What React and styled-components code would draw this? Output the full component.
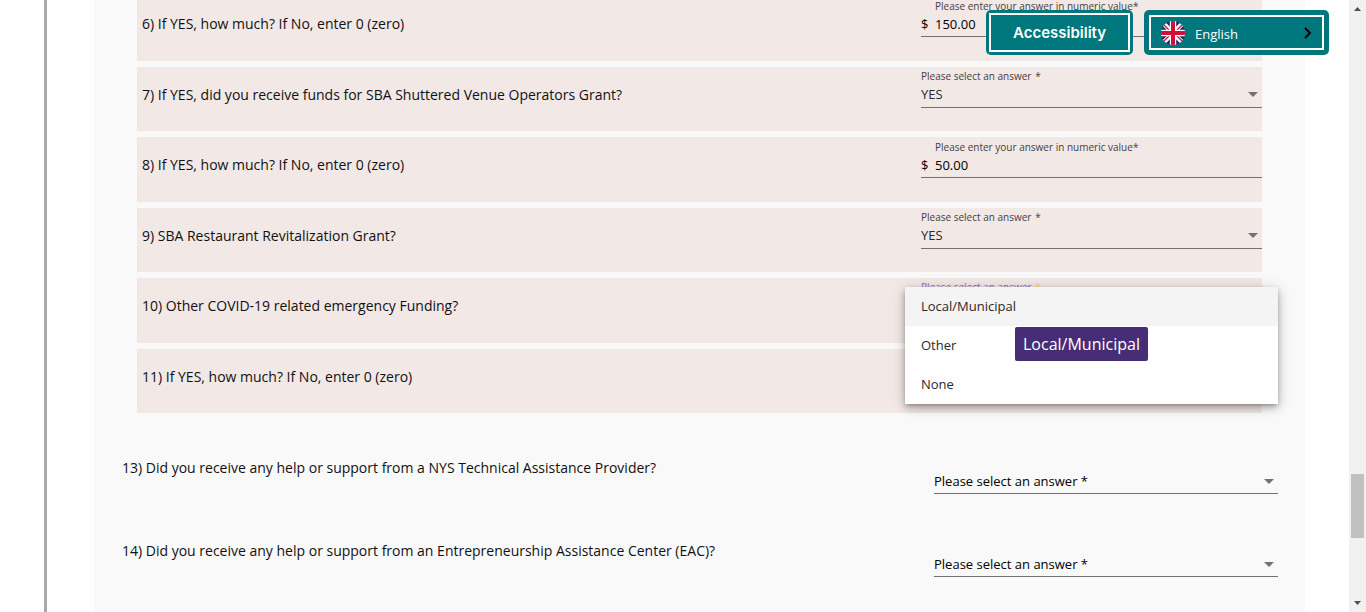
import React from "react";
import styled, { createGlobalStyle } from "styled-components";

const GlobalStyle = createGlobalStyle`
  * { box-sizing: border-box; }
  html, body, #root { height: 100%; }
  body {
    margin: 0;
    overflow: hidden;
    background: #fff;
    color: #111;
    font-family: "Open Sans", "Noto Sans", sans-serif;
    font-size: 14px;
  }
`;

const Viewport = styled.div`
  display: flex;
  height: 100vh;
  overflow: hidden;
`;

const Page = styled.main`
  flex: 1;
  min-width: 0;
  display: flex;
  margin-left: 44px;
  padding: 0 44px 0 47px;
  border-left: 3px solid #a9a8ae;
`;

const Panel = styled.form`
  flex: 1;
  min-width: 0;
  background: #f9f9f9;
`;

const FundingList = styled.section`
  display: grid;
  grid-auto-rows: 65px 64px;
  row-gap: 6px;
  margin: -4px 43px 0;
`;

const FundingRow = styled.div`
  display: grid;
  grid-template-columns: 784fr 341fr;
  background: #f2e8e6;
`;

const Question = styled.label`
  padding: 18px 5px 0;
  line-height: 20px;
`;

const Field = styled.div`
  position: relative;
  display: flex;
  flex-direction: column;
  height: 41px;
  padding-top: ${(p) => (p.$select ? 2 : 3)}px;
  border-bottom: 1px solid #757173;
`;

const FieldLabel = styled.span`
  display: flex;
  gap: ${(p) => (p.$spaced ? 4 : 0)}px;
  padding-left: ${(p) => p.$indent || 0}px;
  font-size: 10px;
  line-height: 14px;
  color: ${(p) => (p.$active ? "#8a68c8" : "#464140")};
`;

const Star = styled.span`
  color: ${(p) => (p.$active ? "#ffd740" : "inherit")};
`;

const Control = styled.div`
  display: grid;
  grid-template-columns: 1fr 10px;
  align-items: center;
  padding-right: 4px;
  height: 22px;
`;

const Select = styled.select`
  grid-area: 1 / 1 / 2 / 3;
  width: 100%;
  height: 22px;
  padding: 0;
  border: 0;
  outline: 0;
  appearance: none;
  background: transparent;
  color: ${(p) => (p.$prompt ? "#000" : "#2c2829")};
  font: 13px/20px "Open Sans", "Noto Sans", sans-serif;
`;

const Arrow = styled.span`
  grid-area: 1 / 2;
  border: 5px solid transparent;
  border-top-color: #757173;
  border-bottom: 0;
  pointer-events: none;
`;

const Amount = styled.div`
  display: flex;
  align-items: center;
  height: 22px;
  font-size: 13px;
  color: #000;
`;

const Currency = styled.span`
  width: 14px;
`;

const AmountInput = styled.input`
  flex: 1;
  min-width: 0;
  height: 22px;
  padding: 0;
  border: 0;
  outline: 0;
  background: transparent;
  color: #000;
  font: 13px/20px "Open Sans", "Noto Sans", sans-serif;
`;

const Menu = styled.ul`
  position: absolute;
  z-index: 2;
  top: 9px;
  left: -16px;
  right: -16px;
  margin: 0;
  padding: 0;
  list-style: none;
  background: #fff;
  box-shadow: 0 2px 4px -1px rgba(0, 0, 0, 0.25), 0 4px 8px rgba(0, 0, 0, 0.2),
    0 2px 14px rgba(0, 0, 0, 0.16);
`;

const Option = styled.li`
  padding: 0 16px;
  font-size: 13px;
  line-height: 39px;
  color: #2c2829;
  background: ${(p) => (p.$active ? "#f4f4f4" : "transparent")};
`;

const Tooltip = styled.div`
  position: absolute;
  top: 40px;
  left: 110px;
  padding: 0 8px;
  border-radius: 2px;
  background: #472d75;
  color: #fff;
  font-size: 16px;
  line-height: 34px;
  white-space: nowrap;
`;

const SupportList = styled.section`
  display: grid;
  grid-auto-rows: 83px;
  margin: 40px 27px 0 28px;
`;

const SupportRow = styled.div`
  display: grid;
  grid-template-columns: 812fr 344fr;
`;

const SupportQuestion = styled.label`
  padding-top: 5px;
  line-height: 20px;
`;

const SupportField = styled.div`
  display: flex;
  flex-direction: column;
  justify-content: flex-end;
  height: 41px;
  padding-bottom: 1px;
  border-bottom: 1px solid #757173;
`;

const FloatingBar = styled.div`
  position: fixed;
  z-index: 5;
  top: 10px;
  right: 37px;
  display: flex;
  align-items: center;
  gap: 11px;
`;

const FloatingButton = styled.button`
  display: flex;
  width: ${(p) => p.$width}px;
  height: 45px;
  padding: ${(p) => p.$edge}px;
  border: 0;
  border-radius: 5px;
  background: #00767d;
  color: #fff;
  cursor: pointer;
`;

const ButtonFace = styled.span`
  flex: 1;
  align-self: stretch;
  display: flex;
  align-items: center;
  justify-content: ${(p) => (p.$center ? "center" : "flex-start")};
  gap: 10px;
  padding: 0 10px;
  border: 2px solid #fff;
  font: ${(p) =>
    p.$center
      ? '600 15px/20px Inter, "Open Sans", sans-serif'
      : '13px/20px "Open Sans", "Noto Sans", sans-serif'};
`;

const Language = styled.span`
  flex: 1;
  padding-top: 2px;
  text-align: left;
`;

const ScrollRail = styled.div`
  width: 17px;
  display: flex;
  flex-direction: column;
  align-items: center;
  background: #f1f1f1;
`;

const RailSpace = styled.span`
  flex: ${(p) => p.$share};
`;

const Thumb = styled.span`
  flex: 64;
  width: 13px;
  background: #c1c1c1;
`;

const RailArrow = styled.svg`
  width: 17px;
  height: 17px;
  fill: #505050;
`;

function Flag() {
  return (
    <svg width="24" height="24" viewBox="0 0 24 24" aria-hidden="true">
      <clipPath id="disc">
        <circle cx="12" cy="12" r="12" />
      </clipPath>
      <g clipPath="url(#disc)">
        <rect width="24" height="24" fill="#1f2a6b" />
        <path d="M0 0 24 24M24 0 0 24" stroke="#fff" strokeWidth="4.5" />
        <path d="M0 1 11 12M13 12 24 23M24 1 13 12M11 12 0 23" stroke="#d0103a" strokeWidth="1.3" />
        <path d="M12 0V24M0 12H24" stroke="#fff" strokeWidth="6.4" />
        <path d="M12 0V24M0 12H24" stroke="#d0103a" strokeWidth="4" />
      </g>
    </svg>
  );
}

function SelectField({ id, value, open }) {
  return (
    <Field $select>
      <FieldLabel $spaced $active={open}>
        Please select an answer <Star $active={open}>*</Star>
      </FieldLabel>
      <Control>
        <Select id={id} defaultValue={value}>
          <option>{value}</option>
        </Select>
        <Arrow />
      </Control>
      {open && (
        <Menu role="listbox" aria-label="Funding sources">
          <Option role="option" aria-selected="true" $active>
            Local/Municipal
          </Option>
          <Option role="option">Other</Option>
          <Option role="option">None</Option>
          <Tooltip role="tooltip">Local/Municipal</Tooltip>
        </Menu>
      )}
    </Field>
  );
}

function AmountField({ id, value }) {
  return (
    <Field>
      {value && (
        <FieldLabel $indent={14}>
          Please enter your answer in numeric value <Star>*</Star>
        </FieldLabel>
      )}
      <Amount>
        {value && <Currency>$</Currency>}
        <AmountInput id={id} type="text" inputMode="decimal" defaultValue={value} />
      </Amount>
    </Field>
  );
}

const funding = [
  { n: 6, text: "If YES, how much? If No, enter 0 (zero)", amount: "150.00" },
  { n: 7, text: "If YES, did you receive funds for SBA Shuttered Venue Operators Grant?", answer: "YES" },
  { n: 8, text: "If YES, how much? If No, enter 0 (zero)", amount: "50.00" },
  { n: 9, text: "SBA Restaurant Revitalization Grant?", answer: "YES" },
  { n: 10, text: "Other COVID-19 related emergency Funding?", answer: "", open: true },
  { n: 11, text: "If YES, how much? If No, enter 0 (zero)", amount: "" },
];

const support = [
  { n: 13, text: "Did you receive any help or support from a NYS Technical Assistance Provider?" },
  { n: 14, text: "Did you receive any help or support from an Entrepreneurship Assistance Center (EAC)?" },
];

export default function App() {
  return (
    <>
      <GlobalStyle />
      <Viewport>
        <Page>
          <Panel>
            <FundingList>
              {funding.map((q) => (
                <FundingRow key={q.n}>
                  <Question htmlFor={`q${q.n}`}>{`${q.n}) ${q.text}`}</Question>
                  {q.amount !== undefined ? (
                    <AmountField id={`q${q.n}`} value={q.amount} />
                  ) : (
                    <SelectField id={`q${q.n}`} value={q.answer} open={q.open} />
                  )}
                </FundingRow>
              ))}
            </FundingList>
            <SupportList>
              {support.map((q) => (
                <SupportRow key={q.n}>
                  <SupportQuestion htmlFor={`q${q.n}`}>{`${q.n}) ${q.text}`}</SupportQuestion>
                  <SupportField>
                    <Control>
                      <Select id={`q${q.n}`} $prompt>
                        <option>Please select an answer *</option>
                      </Select>
                      <Arrow />
                    </Control>
                  </SupportField>
                </SupportRow>
              ))}
            </SupportList>
          </Panel>
        </Page>
        <ScrollRail aria-hidden="true">
          <RailArrow viewBox="0 0 17 17">
            <path d="M5 11h7L8.500 7z" />
          </RailArrow>
          <RailSpace $share={457} />
          <Thumb />
          <RailSpace $share={57} />
          <RailArrow viewBox="0 0 17 17">
            <path d="M5 6h7L8.500 10z" />
          </RailArrow>
        </ScrollRail>
      </Viewport>
      <FloatingBar>
        <FloatingButton type="button" $width={147} $edge={3}>
          <ButtonFace $center>Accessibility</ButtonFace>
        </FloatingButton>
        <FloatingButton type="button" $width={185} $edge={5}>
          <ButtonFace>
            <Flag />
            <Language>English</Language>
            <svg width="8" height="12" viewBox="0 0 8 12" fill="none" stroke="#000" strokeWidth="2" aria-hidden="true">
              <path d="M1 1l5 5-5 5" />
            </svg>
          </ButtonFace>
        </FloatingButton>
      </FloatingBar>
    </>
  );
}
